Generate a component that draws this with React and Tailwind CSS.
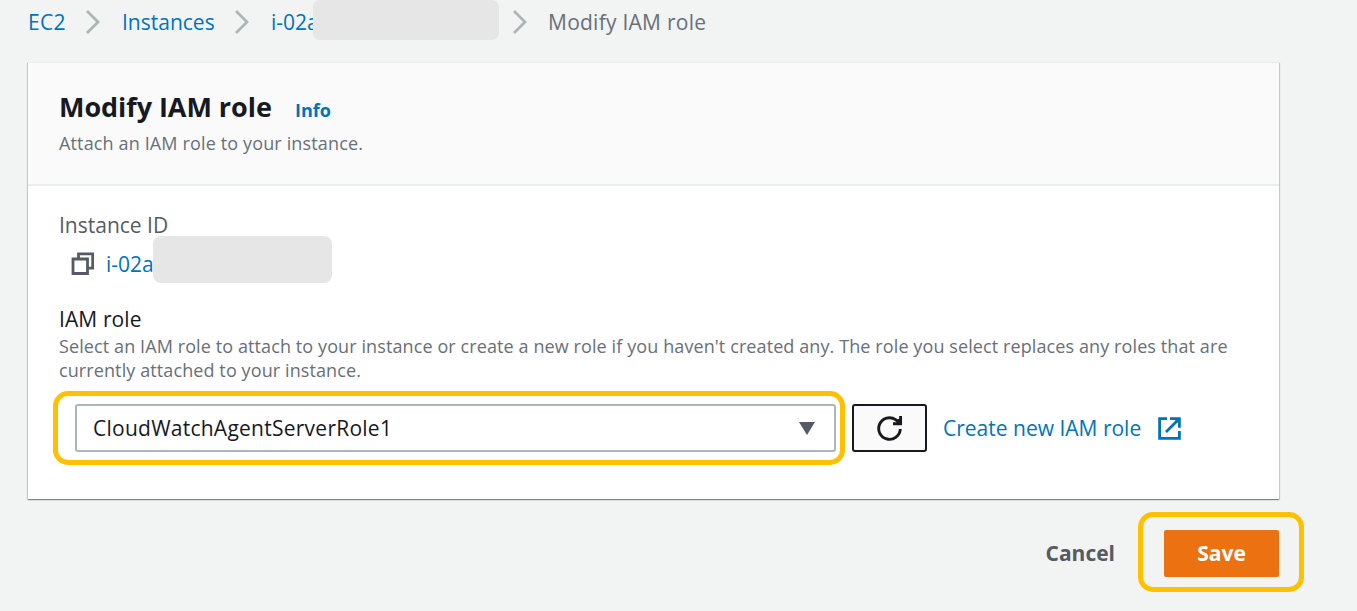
function Chevron() {
  return (
    <svg className="h-6 w-4 shrink-0" viewBox="0 0 16 24" fill="none" stroke="#aab7b8" strokeWidth="2.8">
      <path d="M2 1 13 12 2 23" />
    </svg>
  );
}

function Breadcrumbs() {
  return (
    <nav className="flex h-11 items-center pl-7 text-[21px] leading-none whitespace-nowrap text-[#0073bb]">
      <a className="w-[57px] tracking-[0.3px]">EC2</a>
      <Chevron />
      <a className="ml-[21px] w-[112px]">Instances</a>
      <Chevron />
      <a className="ml-[21px] w-[52px]">i-02a</a>
      <span className="relative -ml-[10px] h-10 w-[186px] shrink-0 -translate-y-0.5 rounded-[7px] bg-[#e6e6e6]" />
      <span className="ml-[13px] flex">
        <Chevron />
      </span>
      <span className="ml-[20px] tracking-[0.25px] text-[#687078]">Modify IAM role</span>
    </nav>
  );
}

function CopyIcon() {
  return (
    <svg className="h-[23px] w-[23px] translate-y-1" viewBox="0 0 23 23" fill="none" stroke="#545b64" strokeWidth="2.8">
      <path d="M2 7h14.5v14.5H2zM7.5 7V1.9h14.2v14.2h-5.2" />
    </svg>
  );
}

function RefreshIcon() {
  return (
    <svg className="h-[27px] w-[27px]" viewBox="0 0 27 27" fill="none" stroke="#16191f" strokeWidth="2.9">
      <path d="M24.3 14A10.8 10.8 0 1 1 19.6 4.6L24 8.5" />
      <path d="M24.6 1v7.8h-7.6" />
      <path d="M19.5 5 24 3.5V9z" fill="#16191f" stroke="none" />
    </svg>
  );
}

function ExternalIcon() {
  return (
    <svg className="h-[23px] w-[23px] -translate-y-px" viewBox="0 0 23 23" fill="none" stroke="#0073bb" strokeWidth="2.8">
      <path d="M9 1.6H1.6v19.8h19.8V14M12 1.6h9.4v9.2M21 2 8 15" />
      <path d="M16 2h5v5z" fill="#0073bb" stroke="none" />
    </svg>
  );
}

export default function App() {
  return (
    <div className="h-[611px] w-[1357px] overflow-hidden bg-[#f2f3f3] font-['Open_Sans','Noto_Sans',sans-serif] text-[#16191f]">
      <Breadcrumbs />
      <main className="mt-[18px] ml-7 h-[437px] w-[1251px] bg-white shadow-[0_1px_1px_0_rgba(0,28,36,0.3),1px_1px_1px_0_rgba(0,28,36,0.15),-1px_1px_1px_0_rgba(0,28,36,0.15)]">
        <header className="h-[124px] border-t border-b-2 border-[#eaeded] bg-[#fafafa] pt-[26px] pr-8 pl-[31px]">
          <div className="flex h-9 items-center whitespace-nowrap">
            <h1 className="w-[236px] text-[27px] leading-9 font-bold tracking-[-0.05px]">Modify IAM role</h1>
            <a className="pt-1.5 text-[18px] font-bold text-[#0073bb]">Info</a>
          </div>
          <p className="text-[18px] leading-[36px] tracking-[0.14px] text-[#687078]">Attach an IAM role to your instance.</p>
        </header>
        <section className="pt-[24px] pl-[31px] text-[21px]">
          <div className="leading-[30px] text-[#545b64]">Instance ID</div>
          <div className="-mt-1 flex h-[47px] items-center pl-[12px]">
            <CopyIcon />
            <a className="ml-3 w-[56px] translate-y-1 leading-[30px] whitespace-nowrap text-[#0073bb]">i-02a</a>
            <span className="relative -ml-[9px] h-[47px] w-[179px] rounded-[8px] bg-[#e6e6e6]" />
          </div>
          <div className="mt-[21px] leading-[30px] tracking-[0.1px]">IAM role</div>
          <p className="mt-px w-[1190px] text-[18px] leading-[23.5px] tracking-[0.1px] text-[#687078]">
            Select an IAM role to attach to your instance or create a new role if you haven't created any. The role you select replaces any roles that are
            <br />
            currently attached to your instance.
          </p>
          <div className="mt-[9px] -ml-[6px] flex items-center whitespace-nowrap">
            <div className="h-[74px] w-[792px] rounded-[15px] border-5 border-[#ffc000] px-4 py-2">
              <button className="ml-px flex h-[48px] w-[761px] items-center justify-between rounded-[3px] border-2 border-[#aab7b8] bg-white pt-px pr-[19px] pl-[16px]">
                <span className="tracking-[0.25px]">CloudWatchAgentServerRole1</span>
                <svg className="h-[13px] w-4" viewBox="0 0 16 13" fill="#545b64">
                  <path d="M0 0h16L8 13z" />
                </svg>
              </button>
            </div>
            <button className="ml-[7px] flex h-[48px] w-[75px] items-center justify-center rounded-[3px] border-2 border-[#16191f] bg-[#fafafa]">
              <RefreshIcon />
            </button>
            <a className="ml-4 flex items-center pt-0.5 text-[#0073bb]">
              <span className="w-[215px]">Create new IAM role</span>
              <ExternalIcon />
            </a>
          </div>
        </section>
      </main>
      <footer className="mt-[13px] flex h-20 w-[1304px] items-center justify-end text-[21px] font-bold">
        <button className="mr-[23px] pt-1 text-[#545b64]">Cancel</button>
        <div className="flex h-20 w-[166px] items-center rounded-[15px] border-5 border-[#ffc000] pl-[21px]">
          <button className="mt-[3px] h-[47px] w-[115px] rounded-[2px] bg-[#ec7211] text-white">Save</button>
        </div>
      </footer>
    </div>
  );
}
